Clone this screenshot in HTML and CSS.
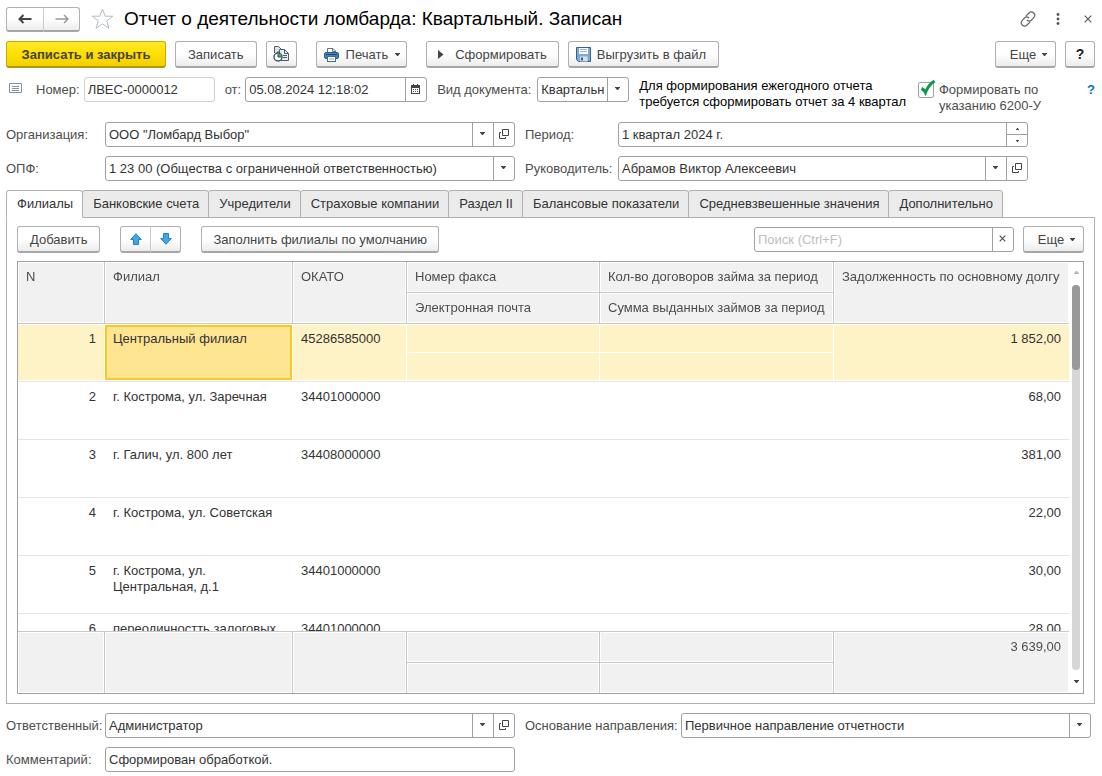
FILE: index.html
```html
<!DOCTYPE html>
<html lang="ru">
<head>
<meta charset="utf-8">
<title>Отчет о деятельности ломбарда</title>
<link rel="stylesheet" href="styles.css">
</head>
<body>
<svg class="defs" aria-hidden="true">
  <symbol id="i-down" viewBox="0 0 5 3"><path d="M0 0h5v1H4.500L3 3H2L.500 1H0z" fill="#444"/></symbol>
  <symbol id="i-open" viewBox="0 0 10 10"><path d="M3.500.500h6v6h-6zM2 3.500H.500v6h6V8" fill="none" stroke="#444"/></symbol>
</svg>
<header class="titlebar">
  <div class="nav">
    <button class="btn nav-btn" aria-label="Назад"><svg width="14" height="10" viewBox="0 0 14 10"><path d="M13.500 5H2M5.500 1L1.500 5l4 4" fill="none" stroke="#444" stroke-width="2"/></svg></button>
    <button class="btn nav-btn" aria-label="Вперед"><svg width="14" height="10" viewBox="0 0 14 10"><path d="M.500 5H13M9 1l4 4-4 4" fill="none" stroke="#999" stroke-width="1.500"/></svg></button>
  </div>
  <button class="plain star" aria-label="Избранное"><svg width="23" height="22" viewBox="0 0 23 22"><path d="M11.500 1.200l2.700 7h7.600l-6.100 4.600 2.300 7.600-6.500-4.600L5 20.400l2.300-7.600L1.200 8.200h7.600z" fill="#fff" stroke="#b4bcc4"/></svg></button>
  <h1>Отчет о деятельности ломбарда: Квартальный. Записан</h1>
  <div class="window-tools">
    <button class="plain" aria-label="Ссылка"><svg width="16" height="16" viewBox="0 0 16 16" fill="none" stroke="#666" stroke-width="1.200" stroke-linecap="round"><path d="M6.300 4.700L9 2c3.200-3 7.800 1.500 4.700 4.700L11.500 9c-1.300 1.200-3 1.200-4.200.200M9.700 11.300L7 14c-3.200 3-7.800-1.500-4.700-4.700L4.500 7c1.300-1.200 3-1.200 4.200-.200"/></svg></button>
    <button class="plain" aria-label="Меню"><svg width="4" height="12" viewBox="0 0 4 12" fill="#555"><circle cx="2" cy="1.500" r="1.400"/><circle cx="2" cy="6" r="1.400"/><circle cx="2" cy="10.500" r="1.400"/></svg></button>
    <button class="plain close" aria-label="Закрыть"><svg width="8" height="8" viewBox="0 0 8 8"><path d="M.700.700l6.600 6.600M7.300.700L.700 7.300" stroke="#555" stroke-width="1.100"/></svg></button>
  </div>
</header>

<div class="toolbar">
  <button class="btn primary">Записать и закрыть</button>
  <button class="btn">Записать</button>
  <button class="btn icon-btn" aria-label="Движения документа"><svg width="18" height="18" viewBox="0 0 18 18"><path d="M2.500 8V1.500h4l3 3V8" fill="#dfe5ea" stroke="#4a6070"/><path d="M7.500 15.500V4.500h5l4 4v7z" fill="#e8edf1" stroke="#4a6070"/><path d="M12.500 4.500v4h4M11 10.500h4m-4 2h4" fill="none" stroke="#4a6070"/><circle cx="6" cy="12" r="4" fill="#fff" stroke="#3d4f5c" stroke-width="1.400"/><path d="M6 12V8.700A3.300 3.300 0 0 1 9.300 12z" fill="#3bb54a"/><path d="M6 9v3h3M5 7h2" fill="none" stroke="#3d4f5c"/></svg></button>
  <button class="btn print"><svg width="15" height="14" viewBox="0 0 15 14"><path d="M3.500 5V.500h5.500l2.500 2.500v2" fill="#fff" stroke="#5b7388"/><path d="M8.500.500v3h3" fill="none" stroke="#5b7388"/><rect x=".500" y="4.500" width="14" height="6" rx="1.500" fill="#4382b8" stroke="#2c5f8c"/><path d="M2 6.500h11" stroke="#234e75"/><rect x="3.500" y="8.500" width="8" height="5" fill="#fff" stroke="#4b6a85"/><path d="M5 11h5" stroke="#9ab"/></svg>Печать<svg class="caret"><use href="#i-down"/></svg></button>
  <button class="btn run"><svg width="7" height="9" viewBox="0 0 7 9"><path d="M1 0l5.500 4.500L1 9z" fill="#444"/></svg>Сформировать</button>
  <button class="btn save"><svg width="15" height="15" viewBox="0 0 15 15"><path d="M.500.500h14v14h-12l-2-2z" fill="#7eabd6" stroke="#33628f"/><path d="M3 1h9v6H3z" fill="#fff"/><path d="M4 2.500h7M4 4.500h7" stroke="#9fb6cc"/><path d="M4 9.500h7.500v5H4z" fill="#d9e2ea"/><path d="M5 10.500h2v3H5z" fill="#33628f"/></svg>Выгрузить в файл</button>
  <button class="btn more">Еще<svg class="caret"><use href="#i-down"/></svg></button>
  <button class="btn help">?</button>
</div>

<div class="doc-row">
  <svg class="doc-icon" width="13" height="10" viewBox="0 0 13 10"><path d="M.500.500h12v9H.500zM3 3.500h7M3 5.500h7M3 7.500h7" fill="none" stroke="#8292a2"/></svg>
  <label for="num">Номер:</label>
  <div class="field num"><input id="num" value="ЛВЕС-0000012" readonly></div>
  <label for="date">от:</label>
  <div class="field date"><input id="date" value="05.08.2024 12:18:02"><button aria-label="Календарь"><svg width="9" height="10" viewBox="0 0 9 10"><path d="M0 1h2V0h1v1h3V0h1v1h2v9H0zM1 4v5h7V4z" fill="#444" fill-rule="evenodd"/><path d="M2 5.500h5M2 7.500h5" stroke="#444" stroke-dasharray="1 1"/></svg></button></div>
  <label for="kind">Вид документа:</label>
  <div class="field kind"><select id="kind"><option>Квартальный</option></select><span class="arrow"><svg class="caret"><use href="#i-down"/></svg></span></div>
  <p class="note">Для формирования ежегодного отчета<br>требуется сформировать отчет за 4 квартал</p>
  <label class="check"><input type="checkbox" checked><svg width="16" height="18" viewBox="0 0 16 18"><path d="M1.500 9.500c2 .800 3 2 4 4C7.500 8.500 10.500 4.500 14.500 2" fill="none" stroke="#0a9a4a" stroke-width="3"/></svg><span>Формировать по<br>указанию 6200-У</span></label>
  <a class="hint" href="#">?</a>
</div>

<div class="form form-top">
  <label for="org">Организация:</label>
  <div class="field"><input id="org" value="ООО &quot;Ломбард Выбор&quot;"><button aria-label="Выбрать"><svg class="caret"><use href="#i-down"/></svg></button><button aria-label="Открыть"><svg class="open"><use href="#i-open"/></svg></button></div>
  <label class="second" for="period">Период:</label>
  <div class="field"><input id="period" value="1 квартал 2024 г."><div class="spin"><button aria-label="Больше"><svg class="tiny up"><use href="#i-down"/></svg></button><button aria-label="Меньше"><svg class="tiny"><use href="#i-down"/></svg></button></div></div>
  <label for="opf">ОПФ:</label>
  <div class="field"><select id="opf"><option>1 23 00 (Общества с ограниченной ответственностью)</option></select><span class="arrow"><svg class="caret"><use href="#i-down"/></svg></span></div>
  <label class="second" for="head">Руководитель:</label>
  <div class="field"><input id="head" value="Абрамов Виктор Алексеевич"><button aria-label="Выбрать"><svg class="caret"><use href="#i-down"/></svg></button><button aria-label="Открыть"><svg class="open"><use href="#i-open"/></svg></button></div>
</div>

<div class="tabs" role="tablist">
  <button class="tab active" role="tab" aria-selected="true">Филиалы</button>
  <button class="tab" role="tab">Банковские счета</button>
  <button class="tab" role="tab">Учредители</button>
  <button class="tab" role="tab">Страховые компании</button>
  <button class="tab" role="tab">Раздел II</button>
  <button class="tab" role="tab">Балансовые показатели</button>
  <button class="tab" role="tab">Средневзвешенные значения</button>
  <button class="tab" role="tab">Дополнительно</button>
</div>
<main class="panel">
  <div class="panel-bar">
    <button class="btn">Добавить</button>
    <div class="move">
      <button class="btn" aria-label="Вверх"><svg width="12" height="12" viewBox="0 0 12 12"><path d="M6 .700L11.300 6.500H8.500v5h-5v-5H.700z" fill="#3fa9e8" stroke="#2a7fb8"/></svg></button>
      <button class="btn" aria-label="Вниз"><svg width="12" height="12" viewBox="0 0 12 12"><path d="M6 11.300L.700 5.500h2.800v-5h5v5h2.800z" fill="#3fa9e8" stroke="#2a7fb8"/></svg></button>
    </div>
    <button class="btn fill">Заполнить филиалы по умолчанию</button>
    <div class="field search"><input aria-label="Поиск" placeholder="Поиск (Ctrl+F)"><button aria-label="Очистить"><svg width="7" height="7" viewBox="0 0 7 7"><path d="M.700.700l5.600 5.600M6.300.700L.700 6.300" stroke="#555" stroke-width="1.200"/></svg></button></div>
    <button class="btn more">Еще<svg class="caret"><use href="#i-down"/></svg></button>
  </div>
  <div class="grid">
    <div class="grid-view">
      <table>
        <colgroup><col class="c-n"><col class="c-branch"><col class="c-okato"><col class="c-fax"><col class="c-count"><col></colgroup>
        <thead>
          <tr><th rowspan="2">N</th><th rowspan="2">Филиал</th><th rowspan="2">ОКАТО</th><th>Номер факса</th><th>Кол-во договоров займа за период</th><th rowspan="2">Задолженность по основному долгу</th></tr>
          <tr><th>Электронная почта</th><th>Сумма выданных займов за период</th></tr>
        </thead>
        <tbody class="selected">
          <tr><td class="r" rowspan="2">1</td><td class="current" rowspan="2">Центральный филиал</td><td rowspan="2">45286585000</td><td class="half"></td><td class="half"></td><td class="r" rowspan="2">1 852,00</td></tr>
          <tr><td class="low"></td><td class="low"></td></tr>
        </tbody>
        <tbody>
          <tr><td class="r">2</td><td>г. Кострома, ул. Заречная</td><td>34401000000</td><td></td><td></td><td class="r">68,00</td></tr>
          <tr><td class="r">3</td><td>г. Галич, ул. 800 лет</td><td>34408000000</td><td></td><td></td><td class="r">381,00</td></tr>
          <tr><td class="r">4</td><td>г. Кострома, ул. Советская</td><td></td><td></td><td></td><td class="r">22,00</td></tr>
          <tr><td class="r">5</td><td>г. Кострома, ул. Центральная, д.1</td><td>34401000000</td><td></td><td></td><td class="r">30,00</td></tr>
          <tr><td class="r">6</td><td>переодичностть залоговых</td><td>34401000000</td><td></td><td></td><td class="r">28,00</td></tr>
        </tbody>
        <tfoot>
          <tr><td rowspan="2"></td><td rowspan="2"></td><td rowspan="2"></td><td></td><td></td><td class="r" rowspan="2">3 639,00</td></tr>
          <tr><td></td><td></td></tr>
        </tfoot>
      </table>
    </div>
    <div class="scroll">
      <svg class="caret up off"><use href="#i-down"/></svg>
      <div class="track"><div class="thumb"></div></div>
      <svg class="caret"><use href="#i-down"/></svg>
    </div>
  </div>
</main>

<footer class="form form-bottom">
  <label for="resp">Ответственный:</label>
  <div class="field"><input id="resp" value="Администратор"><button aria-label="Выбрать"><svg class="caret"><use href="#i-down"/></svg></button><button aria-label="Открыть"><svg class="open"><use href="#i-open"/></svg></button></div>
  <label class="second" for="basis">Основание направления:</label>
  <div class="field"><select id="basis"><option>Первичное направление отчетности</option></select><span class="arrow"><svg class="caret"><use href="#i-down"/></svg></span></div>
  <label for="comment">Комментарий:</label>
  <div class="field"><input id="comment" value="Сформирован обработкой."></div>
</footer>
</body>
</html>
```
FILE: styles.css
```css
* { box-sizing: border-box; }
body {
  margin: 0;
  height: 100vh;
  padding: 6px 7px 4px 6px;
  display: flex;
  flex-direction: column;
  background: #fff;
  color: #4d4d4d;
  font: 13px/16px "Liberation Sans", Arial, sans-serif;
}
button, input, select { font: inherit; color: #333; margin: 0; }
button { cursor: pointer; }
svg { display: block; flex: none; }
.defs { position: absolute; width: 0; height: 0; }
.caret { width: 5px; height: 3px; }
.open { width: 10px; height: 10px; }
.tiny { width: 3px; height: 2px; }
.up { transform: rotate(180deg); }
.off { opacity: .4; }

.btn {
  display: flex;
  align-items: center;
  justify-content: center;
  height: 27px;
  padding: 1px 12px 0;
  border: 1px solid #b0b0b0;
  border-bottom: 2px solid #a6a6a6;
  border-radius: 3px;
  background: linear-gradient(#fff 50%, #ececec);
  color: #444;
  white-space: nowrap;
}
.plain { padding: 0; border: 0; background: none; }

.titlebar { display: flex; align-items: center; height: 26px; }
.nav, .move { display: flex; }
.nav .btn { width: 38px; height: 25px; padding: 0; }
.nav .btn + .btn, .move .btn + .btn { width: 37px; margin-left: -1px; border-left-color: #ccc; border-radius: 0 3px 3px 0; }
.nav .btn:first-child, .move .btn:first-child { border-radius: 3px 0 0 3px; }
.star { margin: 0 10px 0 11px; }
h1 { margin: 0; color: #000; font-size: 19px; line-height: 26px; font-weight: normal; white-space: nowrap; }
.window-tools { display: flex; align-items: center; gap: 20px; margin-left: auto; padding-right: 3px; }
.close { margin-left: 4px; }

.toolbar { display: flex; gap: 9px; margin-top: 9px; }
.primary {
  width: 160px;
  border-color: #c9a800;
  border-bottom-color: #b59700;
  background: linear-gradient(#ffe82e, #ffdf00 50%, #f2cf00);
  font-weight: bold;
}
.icon-btn { width: 31px; padding: 0; }
.icon-btn, .print { margin-right: 10px; }
.print { padding: 1px 6px 0 7px; gap: 7px; }
.run { padding: 1px 11px 0 10px; gap: 11px; }
.save { padding: 1px 12px 0 7px; gap: 6px; }
.more { width: 61px; padding: 1px 6px 0 12px; gap: 6px; }
.toolbar .more { margin-left: auto; }
.help { width: 30px; padding: 0; color: #222; font-weight: bold; font-size: 14px; }

.field {
  position: relative;
  display: flex;
  min-width: 0;
  height: 25px;
  border: 1px solid #a0a0a0;
  border-radius: 3px;
  background: #fff;
}
.field input, .field select {
  flex: 1;
  min-width: 0;
  width: 0;
  padding: 0 3px;
  border: 0;
  outline: 0;
  background: transparent;
  appearance: none;
}
.field select { padding-right: 24px; }
.field button, .arrow {
  display: flex;
  align-items: center;
  justify-content: center;
  width: 21px;
  padding: 0 1px 2px 0;
  border: 0;
  border-left: 1px solid #a0a0a0;
  background: none;
}
.arrow { position: absolute; top: 0; right: 0; bottom: 0; pointer-events: none; }
.spin { display: flex; flex-direction: column; border-left: 1px solid #a0a0a0; }
.field .spin button { flex: 1; width: 20px; padding: 0; border-left: 0; }
.field .spin button + button { border-top: 1px solid #a0a0a0; }

.doc-row { display: flex; align-items: flex-start; margin-top: 9px; }
.doc-row > label { padding-top: 5px; white-space: nowrap; }
.doc-icon { margin: 6px 14px 0 3px; }
.num { width: 131px; margin: 0 10px 0 4px; border-color: #d0d0d0; }
.date { width: 182px; margin: 0 10px 0 4px; }
.kind { width: 92px; margin: 0 10px 0 6px; }
.note { margin: 1px 0 0; color: #000; white-space: nowrap; }
.doc-row .check { position: relative; display: flex; gap: 5px; margin-left: auto; }
.check input { appearance: none; width: 16px; height: 16px; margin: 0; border: 1px solid #a0a0a0; border-radius: 2px; background: #fff; }
.check svg { position: absolute; left: 2px; top: 2px; }
.hint { margin: 5px 0 0 46px; color: #0078c8; font-weight: bold; text-decoration: none; }

.form { display: grid; row-gap: 9px; align-items: center; }
.form .second { padding-left: 10px; }
.form-top { grid-template-columns: 99px 1fr 103px 1fr; margin-top: 8px; padding-right: 67px; }
.form-bottom { grid-template-columns: 99px 1fr 166px 1fr; margin-top: 9px; padding-right: 4px; }

.tabs { display: flex; margin-top: 9px; }
.tab {
  height: 28px;
  margin-right: -1px;
  padding: 0 9px 0 10px;
  border: 1px solid #b0b0b0;
  border-radius: 3px 3px 0 0;
  background: #ebebeb;
  white-space: nowrap;
}
.tab.active { border-bottom-color: #fff; background: #fff; z-index: 1; }
.panel {
  display: flex;
  flex-direction: column;
  flex: 1;
  min-height: 0;
  margin-top: -1px;
  padding: 8px 10px 9px;
  border: 1px solid #b0b0b0;
}
.panel-bar { display: flex; gap: 9px; margin-bottom: 8px; }
.move { margin: 0 11px; }
.move .btn, .move .btn + .btn { width: 31px; padding: 0; }
.fill { padding: 1px 11px 0; }
.search { width: 260px; margin: 1px 0 0 auto; }
.search input::placeholder { color: #c0c0c0; opacity: 1; }

.grid { display: flex; flex: 1; min-height: 0; border: 1px solid #a0a0a0; }
.grid-view { flex: 1; min-width: 0; overflow: hidden; }
table { width: 100%; border-spacing: 0; table-layout: fixed; }
.c-n { width: 87px; }
.c-branch { width: 188px; }
.c-okato { width: 114px; }
.c-fax { width: 193px; }
.c-count { width: 234px; }
th, td { height: 58px; padding: 7px 8px; text-align: left; vertical-align: top; font-weight: normal; }
td { border-bottom: 1px solid #e4e4e4; color: #333; }
.r { text-align: right; }
.r:first-child { padding-right: 9px; }
thead { position: sticky; top: 0; }
tfoot { position: sticky; bottom: 0; }
th, tfoot td {
  height: 31px;
  padding-right: 7px;
  border-right: 1px solid #c8c8c8;
  border-bottom: 1px solid #c8c8c8;
  background: #f1f1f1;
  box-shadow: inset 0 0 0 1px #fff;
  color: #4d4d4d;
  white-space: nowrap;
}
th:last-child[rowspan], tfoot td.r { border-right: 0; }
tfoot td.r { padding-right: 8px; }
tfoot tr:first-child td { border-top: 1px solid #c8c8c8; }
tfoot tr:first-child td:not([rowspan]) { height: 32px; }
tfoot tr:first-child td[rowspan], tfoot tr:last-child td { border-bottom: 0; }
tfoot tr:last-child td { height: 30px; }
.selected td {
  border-right: 1px solid #fff;
  background: #fef2c7;
  box-shadow: inset 0 1px #fff, inset 0 -1px #fff;
}
.selected .r:first-child { padding-right: 8px; }
.selected .r:last-child { border-right: 0; }
.selected .half, .selected .low { height: 29px; padding: 0; }
.selected .half { border-bottom-color: #fff; box-shadow: inset 0 1px #fff; }
.selected .low { box-shadow: inset 0 -1px #fff; }
.selected .current {
  background: #fee591;
  box-shadow: inset 0 1px #fff, inset 0 -1px #fff, inset 2px 0 #f9c823, inset -2px 0 #f9c823, inset 0 3px #f9c823, inset 0 -3px #f9c823;
}
.scroll { display: flex; flex-direction: column; align-items: center; width: 14px; padding: 9px 0 10px; }
.track { flex: 1; width: 8px; margin: 11px 0 10px; border-radius: 4px; background: #d6d6d6; }
.thumb { height: 22%; border-radius: 4px; background: #999; }
```
